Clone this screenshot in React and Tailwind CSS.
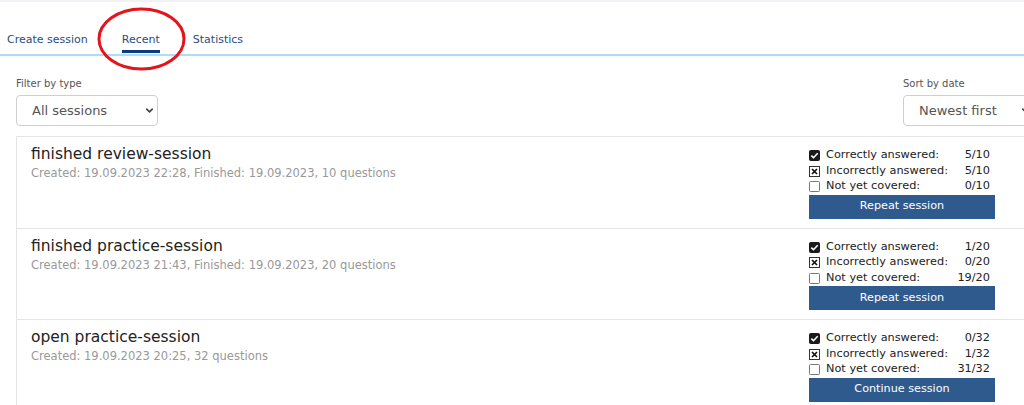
import { ChevronDown } from 'lucide-react';

const sessions = [
  {
    title: 'finished review-session',
    meta: 'Created: 19.09.2023 22:28, Finished: 19.09.2023, 10 questions',
    correct: '5/10',
    incorrect: '5/10',
    open: '0/10',
    action: 'Repeat session',
  },
  {
    title: 'finished practice-session',
    meta: 'Created: 19.09.2023 21:43, Finished: 19.09.2023, 20 questions',
    correct: '1/20',
    incorrect: '0/20',
    open: '19/20',
    action: 'Repeat session',
  },
  {
    title: 'open practice-session',
    meta: 'Created: 19.09.2023 20:25, 32 questions',
    correct: '0/32',
    incorrect: '1/32',
    open: '31/32',
    action: 'Continue session',
  },
];

function BoxChecked() {
  return (
    <svg width="11" height="11" viewBox="0 0 11 11" className="shrink-0">
      <rect x="0.5" y="0.5" width="10" height="10" rx="1" fill="#1a1a1a" stroke="#1a1a1a" />
      <path d="M2.3 5.6 L4.5 7.7 L8.7 3.2" fill="none" stroke="#fff" strokeWidth="1.6" />
    </svg>
  );
}

function BoxCross() {
  return (
    <svg width="11" height="11" viewBox="0 0 11 11" className="shrink-0">
      <rect x="0.5" y="0.5" width="10" height="10" fill="#fff" stroke="#333" />
      <path d="M3 3 L8 8 M8 3 L3 8" stroke="#111" strokeWidth="1.7" />
    </svg>
  );
}

function BoxEmpty() {
  return (
    <svg width="11" height="11" viewBox="0 0 11 11" className="shrink-0">
      <rect x="0.5" y="0.5" width="10" height="10" rx="1" fill="#fff" stroke="#777" />
    </svg>
  );
}

function StatRow({ icon, label, value }) {
  return (
    <div className="flex items-center h-[15.5px] text-[11.3px] text-[#222]">
      {icon}
      <span className="ml-[6px]">{label}</span>
      <span className="ml-auto pr-[5px]">{value}</span>
    </div>
  );
}

function SessionCard({ s }) {
  return (
    <div className="flex border border-[#e4e4e4] -mt-px pl-[14px] pr-[38px] pt-[11px] pb-[9px]">
      <div className="flex-1 -mt-[4px]">
        <div className="text-[15.5px] text-[#222] leading-[20px]">{s.title}</div>
        <div className="text-[11.5px] text-[#999] leading-[16px] mt-[1px]">{s.meta}</div>
      </div>
      <div className="w-[186px] flex flex-col">
        <StatRow icon={<BoxChecked />} label="Correctly answered:" value={s.correct} />
        <StatRow icon={<BoxCross />} label="Incorrectly answered:" value={s.incorrect} />
        <StatRow icon={<BoxEmpty />} label="Not yet covered:" value={s.open} />
        <button className="h-[24px] bg-[#2f5a8e] text-white text-[11.2px]">{s.action}</button>
      </div>
    </div>
  );
}

function Select({ value, width }) {
  return (
    <div
      className={`flex items-center h-[31px] border border-[#cfcfcf] rounded-[4px] bg-white pl-[15px] pr-[2px] text-[13px] text-[#555] ${width}`}
    >
      <span>{value}</span>
      <ChevronDown size={11} strokeWidth={3.5} className="ml-auto text-[#444]" />
    </div>
  );
}

export default function App() {
  return (
    <div className="relative w-[1024px] h-[405px] overflow-hidden bg-white font-['DejaVu_Sans',sans-serif]">
      <div className="h-[2px] bg-[#f3f3f7]" />

      {/* Tabs */}
      <div className="flex items-end h-[52px] pl-[7px] text-[11px] text-[#2a4c7f]">
        <div className="pb-[6px] leading-[16px]">Create session</div>
        <div className="ml-[25px] px-[9px] flex flex-col mb-[1px]">
          <span className="leading-[16px] pb-[2px]">Recent</span>
          <span className="h-[3px] bg-[#0e3a80]" />
        </div>
        <div className="ml-[24px] pb-[6px] leading-[16px]">Statistics</div>
      </div>
      <div className="h-[2px] bg-[#aedcf6]" />

      {/* Content */}
      <div className="w-[1034px] pl-[16px]">
        <div className="flex justify-between pt-[21px] pb-[10px]">
          <div>
            <div className="text-[10px] text-[#555] leading-[14px] mb-[4px]">Filter by type</div>
            <Select value="All sessions" width="w-[142px]" />
          </div>
          <div>
            <div className="text-[10px] text-[#555] leading-[14px] mb-[4px]">Sort by date</div>
            <Select value="Newest first" width="w-[131px]" />
          </div>
        </div>
        <div className="flex flex-col pt-px">
          {sessions.map((s) => (
            <SessionCard key={s.title} s={s} />
          ))}
        </div>
      </div>

      {/* Highlight annotation */}
      <svg className="absolute left-[96px] top-[7px]" width="92" height="66" viewBox="0 0 92 66">
        <ellipse cx="45.5" cy="32" rx="42.5" ry="30" fill="none" stroke="#e3141c" strokeWidth="3" />
      </svg>
    </div>
  );
}
